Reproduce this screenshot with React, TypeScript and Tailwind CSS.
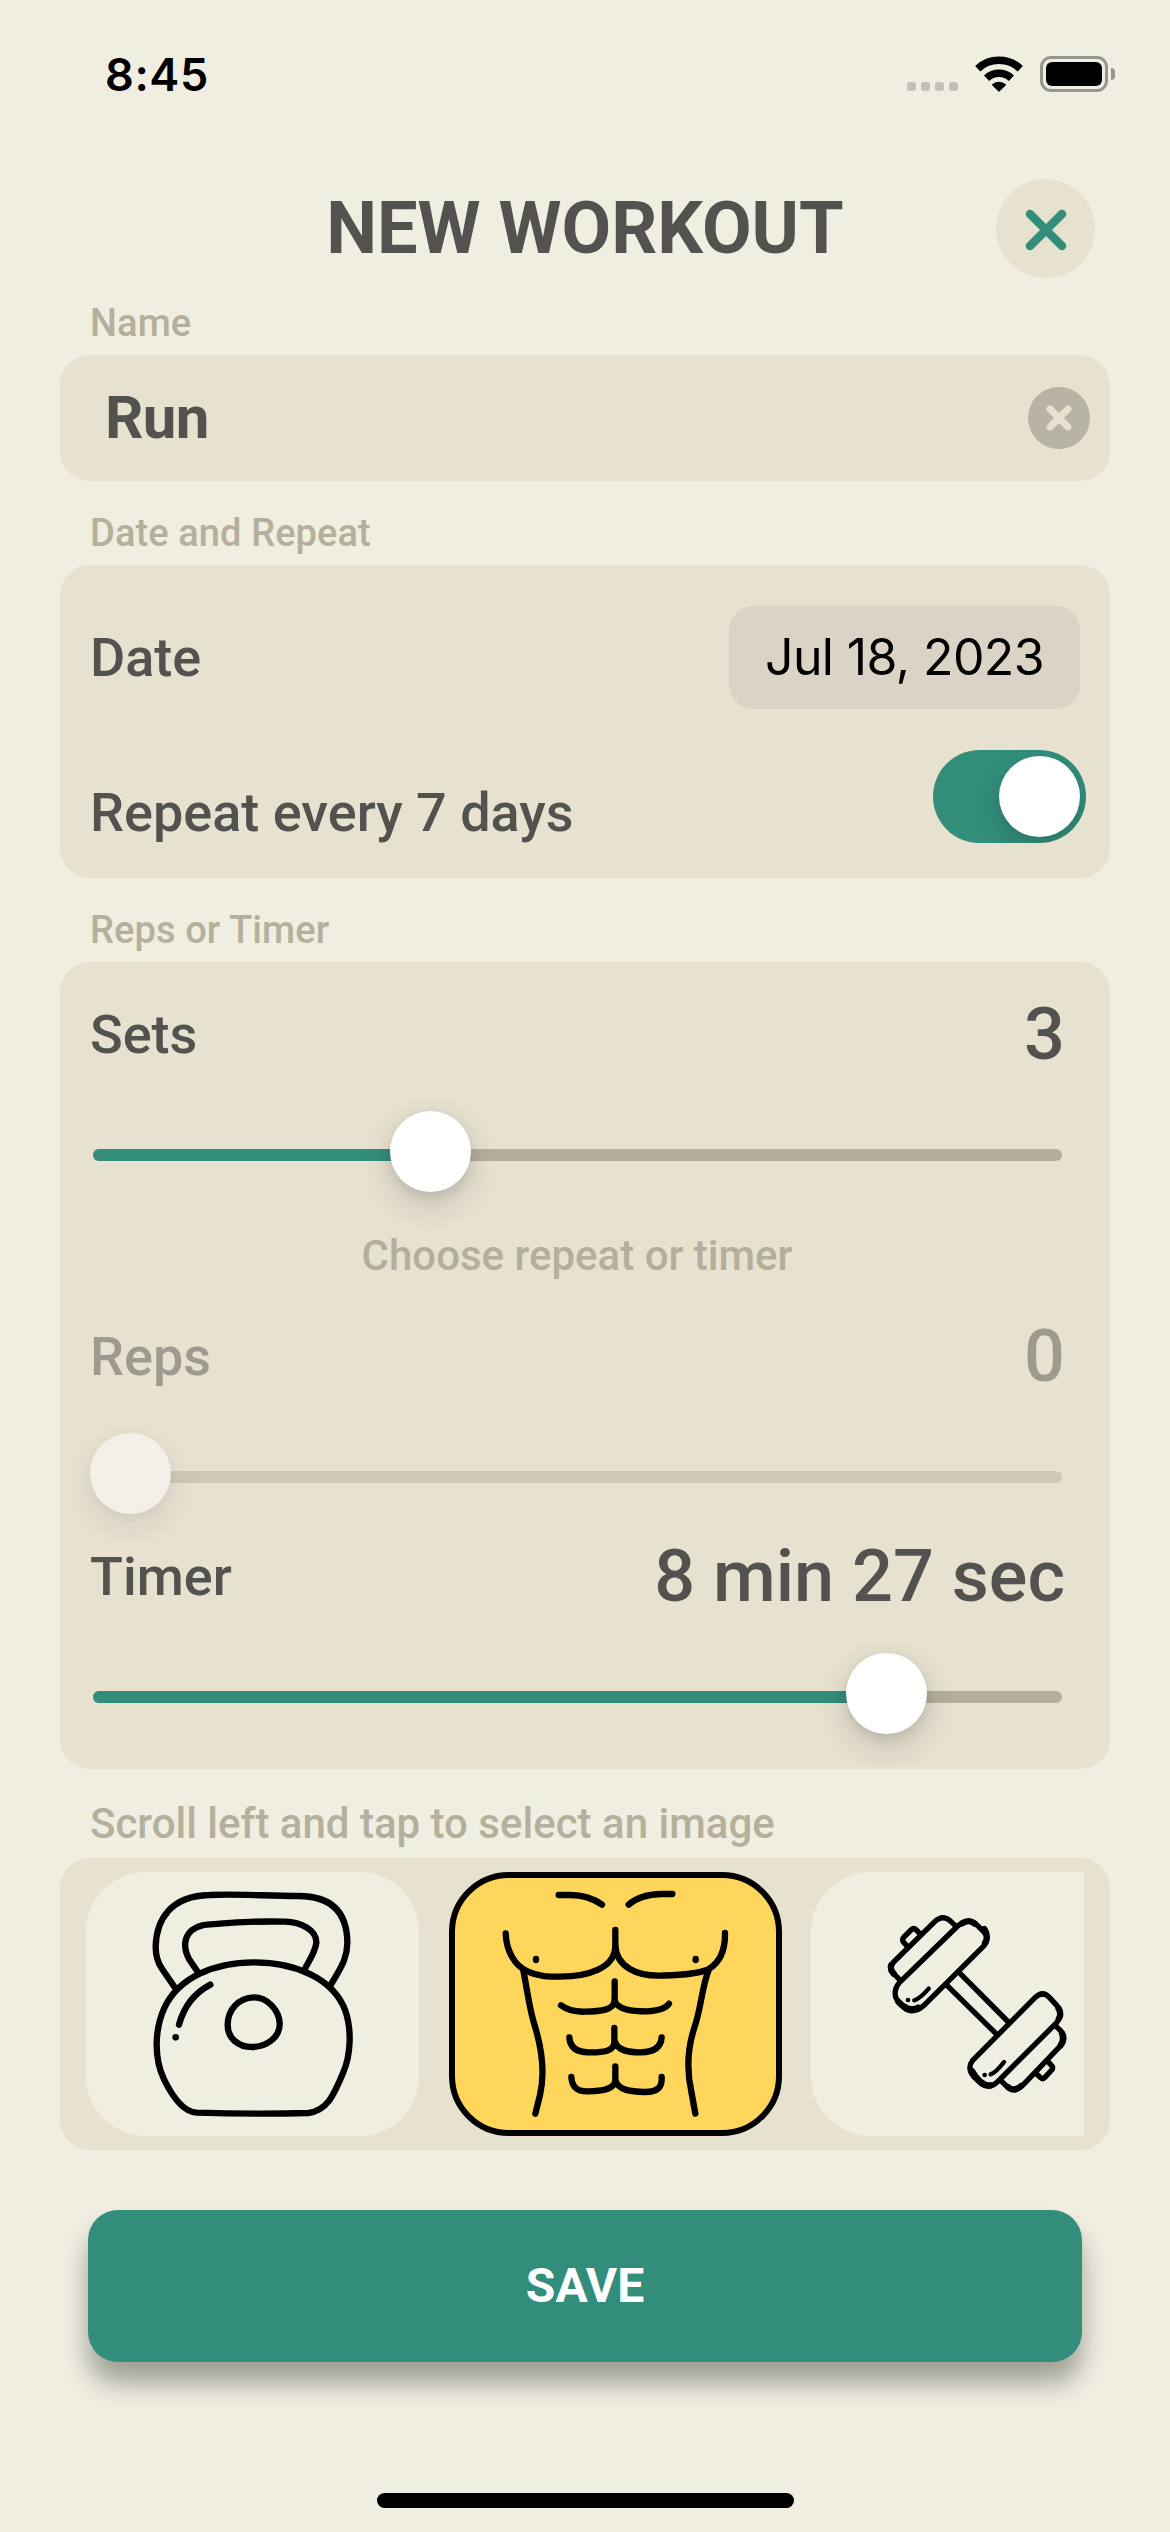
import type { ReactNode } from "react";

function StatusBar() {
  return (
    <div className="flex h-[148px] items-center justify-between pl-[105px] pr-[55px]">
      <span className="font-['Inter',sans-serif] text-[45px] font-semibold leading-none tracking-[0.6px] text-black">
        8:45
      </span>
      <div className="flex items-center">
        <div className="mr-[17px] mt-[25px] flex gap-[5px]">
          {[0, 1, 2, 3].map((dot) => (
            <span key={dot} className="size-[9px] rounded-[3px] bg-[#c2bfb5]" />
          ))}
        </div>
        <svg className="mr-[17px] h-[36px] w-[48px]" viewBox="0 0 48 36" fill="none" stroke="#000" strokeWidth="7.6">
          <path d="M2.7 12.7A31.2 31.2 0 0 1 45.3 12.7" />
          <path d="M11.6 22.2A18.2 18.2 0 0 1 36.4 22.2" />
          <path d="M17.6 28.8A9.6 9.6 0 0 1 30.4 28.8L24 35Z" fill="#000" strokeWidth="1.2" strokeLinejoin="round" />
        </svg>
        <div className="flex h-[36px] w-[68px] rounded-[11px] border-[3px] border-[#97958d] p-[3px]">
          <div className="flex-1 rounded-[6px] bg-black" />
        </div>
        <span className="ml-[3px] h-[12px] w-[4px] rounded-r-full bg-[#97958d]" />
      </div>
    </div>
  );
}

function SectionLabel({ children, className }: { children: ReactNode; className: string }) {
  return <div className={`mb-[9px] pl-[30px] font-medium text-[#b5b09b] ${className}`}>{children}</div>;
}

function Slider({ offset }: { offset: number }) {
  return (
    <div className="relative ml-[33px] mr-[48px] mt-[14px] h-[81px] pt-[38px]">
      <div className="h-[12px] overflow-hidden rounded-full bg-[#b5ae9a]">
        <div className="h-full bg-[#338d7b]" style={{ width: Math.max(0, offset + 40) }} />
      </div>
      <div
        className="absolute top-0 size-[81px] rounded-full bg-white shadow-[0_12px_32px_rgba(0,0,0,0.16),0_4px_12px_rgba(0,0,0,0.08)]"
        style={{ left: offset }}
      />
    </div>
  );
}

function SliderField({
  label,
  value,
  offset,
  disabled = false,
}: {
  label: string;
  value: string;
  offset: number;
  disabled?: boolean;
}) {
  return (
    <div className={disabled ? "opacity-50" : ""}>
      <div className="flex h-[125px] items-center justify-between pl-[30px] pr-[45px] font-medium text-[#52524f]">
        <span className="text-[54px]">{label}</span>
        <span className="text-[72px]">{value}</span>
      </div>
      <Slider offset={offset} />
    </div>
  );
}

function Kettlebell() {
  return (
    <svg className="h-[264px] w-[333px] shrink-0" viewBox="108 96 999 792" fill="none" stroke="#000" strokeWidth="19" strokeLinecap="round">
      <path d="M374 442L337 388C323 368 317 347 317 320C319 235 365 168 478 165C560 161 650 168 745 168C832 168 890 205 892 305C893 348 876 378 858 408L839 440" />
      <path d="M441 392L417 357C400 325 401 292 425 271C450 251 480 254 510 251C575 245 650 244 705 245C752 247 800 268 799 308C796 337 778 360 764 388" />
      <path d="M440 818C400 816 365 765 342 718C312 655 313 570 343 504C385 414 490 367 612 367C735 367 850 415 886 512C906 570 902 645 880 697C850 770 830 812 775 819C660 822 550 821 440 818Z" />
      <path d="M612 472C565 473 533 510 533 555C533 595 565 621 606 621C650 621 690 592 689 550C688 512 653 472 612 472Z" />
      <path d="M481 434C437 457 402 499 387 554" />
      <circle cx="377" cy="592" r="10" fill="#000" stroke="none" />
    </svg>
  );
}

function Torso() {
  return (
    <svg className="-m-[6px] h-[264px] w-[333px] shrink-0" viewBox="57 96 999 792" fill="none" stroke="#000" strokeWidth="19" strokeLinecap="round" strokeLinejoin="round">
      <path d="M386 165H420C458 165 488 174 516 194" />
      <path d="M727 162H695C652 163 621 171 596 194" />
      <path d="M227 280C229 332 253 377 294 395C325 410 360 410 390 410C475 409 555 385 556 318V270" />
      <path d="M556 318C560 380 620 408 690 407C740 405 800 404 835 388C872 366 886 325 885 279" />
      <path d="M280 392C290 440 296 495 312 550C335 622 345 700 330 765L316 821" />
      <path d="M836 390C816 440 813 505 794 560C772 625 770 695 785 760L796 821" />
      <path d="M393 496C415 513 440 516 465 515C510 514 553 511 554 480V424" />
      <path d="M554 480C560 512 615 514 650 514C680 513 706 509 717 491" />
      <path d="M418 592C420 622 438 637 475 637C520 638 554 634 553 605V564" />
      <path d="M555 605C563 634 600 637 632 637C672 637 693 622 695 592" />
      <path d="M424 711C426 739 439 755 473 754C520 753 555 747 556 720V679" />
      <path d="M556 720C564 752 605 755 645 756C685 756 697 740 695 711" />
      <path d="M318 357V360M797 357V360" />
    </svg>
  );
}

function Dumbbell() {
  return (
    <svg className="h-[264px] w-[333px] shrink-0" viewBox="63 96 999 792" fill="none" stroke="#000" strokeWidth="16" strokeLinecap="round" strokeLinejoin="round">
      <path d="M335 421L500 261C522 239 545 239 562 256L581 275C595 289 593 305 580 319L408 490C385 514 361 519 343 503L327 487C309 469 312 442 335 421Z" />
      <path d="M329 419L311 401C299 389 299 378 311 366L432 247C449 230 465 229 480 242L495 256" />
      <path d="M352 319L341 307C336 302 337 296 342 291L363 270C368 265 374 265 379 270L392 283" />
      <path d="M510 400L655 546M471 436L618 581" />
      <path d="M548 661L735 473C750 458 764 458 778 472L801 497C815 513 814 530 800 548L631 717C610 741 590 744 573 731L554 713C536 695 536 676 548 661Z" />
      <path d="M797 558L811 571C825 586 824 602 812 617L703 731C685 750 670 756 654 743L635 724" />
      <path d="M740 702L752 713C756 717 760 717 764 713L785 690C789 685 789 681 785 677L774 665" />
      <path d="M416 446C403 461 390 476 373 481M642 666C630 682 619 697 602 703" strokeWidth="13" />
      <path d="M325 485C341 504 365 514 384 503M583 267C594 284 591 300 585 309M517 250C529 241 543 241 554 251M546 693C561 719 580 738 602 736M806 506C813 518 812 526 807 535M816 580C821 593 820 604 812 616M654 741C666 752 680 750 693 738M304 375C300 385 304 393 311 401" strokeWidth="19" />
      <circle cx="354" cy="480" r="7" fill="#000" stroke="none" />
      <circle cx="584" cy="705" r="7" fill="#000" stroke="none" />
    </svg>
  );
}

export default function App() {
  return (
    <div className="h-[2532px] w-[1170px] overflow-hidden bg-[#f0eee1] font-['Roboto',sans-serif] text-[#52524f]">
      <StatusBar />

      <header className="mt-[31px] grid h-[99px] grid-cols-[1fr_auto_1fr] items-center pr-[75px] pl-[75px]">
        <span />
        <h1 className="text-[72px] font-bold leading-none">NEW WORKOUT</h1>
        <button className="flex size-[99px] items-center justify-center justify-self-end rounded-full bg-[#e7e1d0]">
          <svg className="mt-[2px] size-[42px]" viewBox="0 0 42 42" stroke="#338d7b" strokeWidth="8.5" strokeLinecap="round">
            <path d="M5 5L37 37M37 5L5 37" />
          </svg>
        </button>
      </header>

      <main className="px-[60px]">
        <SectionLabel className="mt-[23px] text-[38px] leading-[45px] tracking-[0.1px]">Name</SectionLabel>
        <div className="flex h-[126px] items-center justify-between rounded-[30px] bg-[#e7e1d0] pl-[45px] pr-[20px]">
          <span className="text-[60px] font-bold leading-none tracking-[-0.6px]">Run</span>
          <span className="flex size-[62px] items-center justify-center rounded-full bg-[#b7b3a5]">
            <svg className="size-[26px]" viewBox="0 0 26 26" stroke="#e7e1d0" strokeWidth="7" strokeLinecap="round">
              <path d="M4 4L22 22M22 4L4 22" />
            </svg>
          </span>
        </div>

        <SectionLabel className="mt-[30px] text-[38px] leading-[45px] tracking-[0.1px]">Date and Repeat</SectionLabel>
        <div className="h-[313px] rounded-[30px] bg-[#e7e1d0] pl-[30px]">
          <div className="flex h-[185px] items-center justify-between pr-[30px]">
            <span className="text-[54px] font-medium">Date</span>
            <span className="flex h-[103px] w-[351px] items-center justify-center rounded-[24px] bg-[#dad3c6] font-['Inter',sans-serif] text-[50px] tracking-[-0.6px] text-black">
              Jul 18, 2023
            </span>
          </div>
          <div className="flex h-[93px] justify-between pr-[24px]">
            <span className="pt-[32px] text-[54px] font-medium leading-[61px]">Repeat every 7 days</span>
            <div className="flex h-[93px] w-[153px] justify-end overflow-hidden rounded-full bg-[#338d7b] p-[6px]">
              <span className="size-[81px] rounded-full bg-white shadow-[0_9px_24px_rgba(0,0,0,0.18)]" />
            </div>
          </div>
        </div>

        <SectionLabel className="mt-[30px] text-[38px] leading-[45px] tracking-[0.1px]">Reps or Timer</SectionLabel>
        <div className="h-[807px] rounded-[30px] bg-[#e7e1d0] pt-[10px]">
          <SliderField label="Sets" value="3" offset={297} />
          <p className="pb-[10px] pl-[30px] pr-[46px] pt-[35px] text-center text-[42px] font-medium leading-[57px] text-[#b5ae9a]">
            Choose repeat or timer
          </p>
          <SliderField label="Reps" value="0" offset={-3} disabled />
          <SliderField label="Timer" value="8 min 27 sec" offset={753} />
        </div>

        <SectionLabel className="mt-[30px] text-[42px] leading-[50px]">Scroll left and tap to select an image</SectionLabel>
        <div className="h-[292px] rounded-[30px] bg-[#e7e1d0] px-[26px] py-[14px]">
          <div className="flex gap-[29.5px] overflow-hidden">
            <div className="h-[264px] w-[333px] shrink-0 rounded-[60px] bg-[#f0eee1]">
              <Kettlebell />
            </div>
            <div className="h-[264px] w-[333px] shrink-0 rounded-[60px] border-[6px] border-black bg-[#fed65c]">
              <Torso />
            </div>
            <div className="h-[264px] w-[333px] shrink-0 rounded-[60px] bg-[#f0eee1]">
              <Dumbbell />
            </div>
          </div>
        </div>

        <button className="mx-[28px] mt-[60px] flex h-[152px] w-[994px] items-center justify-center rounded-[30px] bg-[#338d7b] text-[48px] font-bold text-white shadow-[0_21px_26px_rgba(0,0,0,0.33)]">
          SAVE
        </button>
      </main>

      <div className="mx-auto mt-[131px] h-[15px] w-[417px] rounded-full bg-black" />
    </div>
  );
}
